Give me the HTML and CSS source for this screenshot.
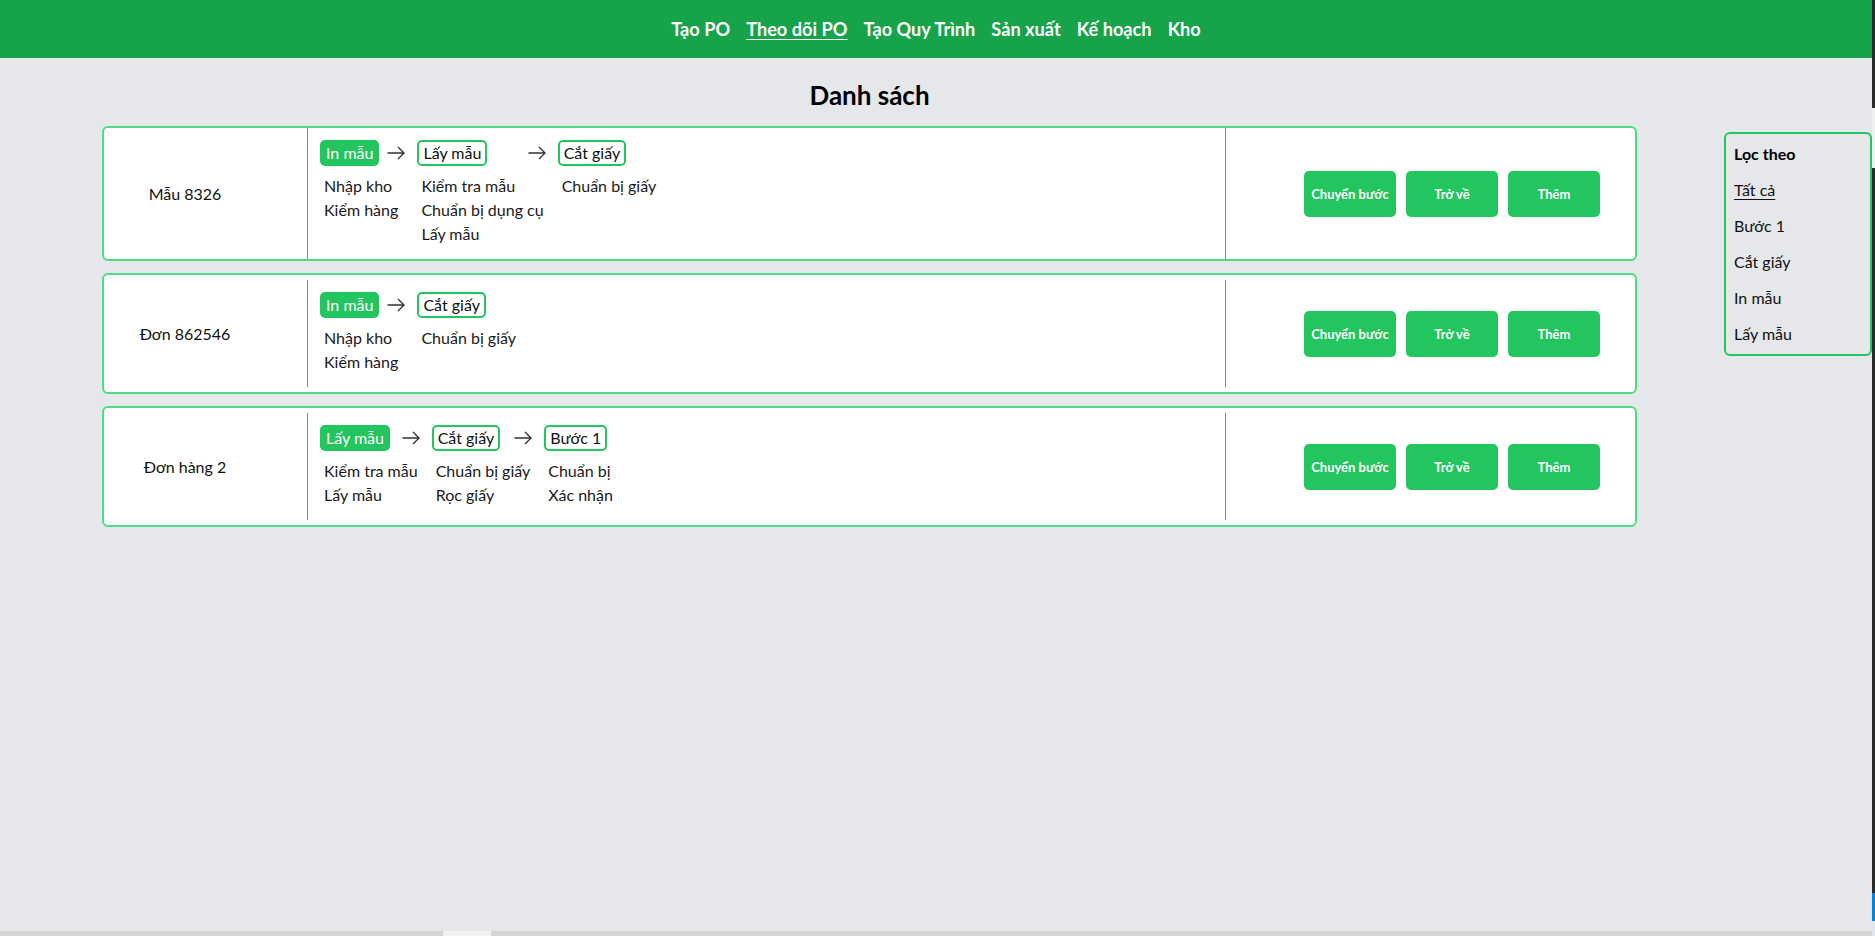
FILE: index.html
```html
<!DOCTYPE html>
<html lang="vi">
<head>
<meta charset="utf-8">
<title>Danh sách</title>
<link rel="stylesheet" href="styles.css">
</head>
<body>
<div class="app">
  <header class="topbar">
    <nav class="nav">
      <a class="nav-link" href="#">Tạo PO</a>
      <a class="nav-link nav-current" href="#">Theo dõi PO</a>
      <a class="nav-link" href="#">Tạo Quy Trình</a>
      <a class="nav-link" href="#">Sản xuất</a>
      <a class="nav-link" href="#">Kế hoạch</a>
      <a class="nav-link" href="#">Kho</a>
    </nav>
  </header>

  <div class="content">
    <main class="main">
      <h1 class="title">Danh sách</h1>

      <div class="card">
        <div class="row">
          <div class="name">Mẫu 8326</div>
          <div class="steps">
            <div class="step">
              <div class="step-head"><span class="tag tag-active">In mẫu</span><svg class="arrow" width="18" height="14" viewBox="0 0 18 14"><path d="M0.5 7H17M11 1L17 7L11 13" fill="none" stroke="#333" stroke-width="1.4"/></svg></div>
              <ul class="tasks"><li>Nhập kho</li><li>Kiểm hàng</li></ul>
            </div>
            <div class="step">
              <div class="step-head"><span class="tag">Lấy mẫu</span><svg class="arrow" width="18" height="14" viewBox="0 0 18 14"><path d="M0.5 7H17M11 1L17 7L11 13" fill="none" stroke="#333" stroke-width="1.4"/></svg></div>
              <ul class="tasks"><li>Kiểm tra mẫu</li><li>Chuẩn bị dụng cụ</li><li>Lấy mẫu</li></ul>
            </div>
            <div class="step">
              <div class="step-head"><span class="tag">Cắt giấy</span></div>
              <ul class="tasks"><li>Chuẩn bị giấy</li></ul>
            </div>
          </div>
          <div class="actions">
            <button class="btn">Chuyển bước</button>
            <button class="btn">Trở về</button>
            <button class="btn">Thêm</button>
          </div>
        </div>
      </div>

      <div class="card">
        <div class="row">
          <div class="name">Đơn 862546</div>
          <div class="steps">
            <div class="step">
              <div class="step-head"><span class="tag tag-active">In mẫu</span><svg class="arrow" width="18" height="14" viewBox="0 0 18 14"><path d="M0.5 7H17M11 1L17 7L11 13" fill="none" stroke="#333" stroke-width="1.4"/></svg></div>
              <ul class="tasks"><li>Nhập kho</li><li>Kiểm hàng</li></ul>
            </div>
            <div class="step">
              <div class="step-head"><span class="tag">Cắt giấy</span></div>
              <ul class="tasks"><li>Chuẩn bị giấy</li></ul>
            </div>
          </div>
          <div class="actions">
            <button class="btn">Chuyển bước</button>
            <button class="btn">Trở về</button>
            <button class="btn">Thêm</button>
          </div>
        </div>
      </div>

      <div class="card">
        <div class="row">
          <div class="name">Đơn hàng 2</div>
          <div class="steps">
            <div class="step">
              <div class="step-head"><span class="tag tag-active">Lấy mẫu</span><svg class="arrow" width="18" height="14" viewBox="0 0 18 14"><path d="M0.5 7H17M11 1L17 7L11 13" fill="none" stroke="#333" stroke-width="1.4"/></svg></div>
              <ul class="tasks"><li>Kiểm tra mẫu</li><li>Lấy mẫu</li></ul>
            </div>
            <div class="step">
              <div class="step-head"><span class="tag">Cắt giấy</span><svg class="arrow" width="18" height="14" viewBox="0 0 18 14"><path d="M0.5 7H17M11 1L17 7L11 13" fill="none" stroke="#333" stroke-width="1.4"/></svg></div>
              <ul class="tasks"><li>Chuẩn bị giấy</li><li>Rọc giấy</li></ul>
            </div>
            <div class="step">
              <div class="step-head"><span class="tag">Bước 1</span></div>
              <ul class="tasks"><li>Chuẩn bị</li><li>Xác nhận</li></ul>
            </div>
          </div>
          <div class="actions">
            <button class="btn">Chuyển bước</button>
            <button class="btn">Trở về</button>
            <button class="btn">Thêm</button>
          </div>
        </div>
      </div>
    </main>

    <aside class="filter">
      <div class="filter-title">Lọc theo</div>
      <a class="filter-item filter-current" href="#">Tất cả</a>
      <a class="filter-item" href="#">Bước 1</a>
      <a class="filter-item" href="#">Cắt giấy</a>
      <a class="filter-item" href="#">In mẫu</a>
      <a class="filter-item" href="#">Lấy mẫu</a>
    </aside>
  </div>
</div>
<div class="vstrip"></div>
<div class="hscroll"><div class="hscroll-thumb"></div></div>
</body>
</html>
```

FILE: styles.css
```css
* { box-sizing: border-box; }

html, body {
  margin: 0;
  padding: 0;
  background: #e5e7eb;
  font-family: Lato, "Noto Sans", "Liberation Sans", sans-serif;
  color: #111;
}

.app {
  margin-right: 3px;
  min-height: 936px;
}

.topbar {
  height: 58px;
  background: #16a34a;
  display: flex;
  align-items: center;
  justify-content: center;
}

.nav {
  display: flex;
  gap: 16px;
  align-items: center;
}

.nav-link {
  color: #fff;
  font-size: 18.2px;
  font-weight: 700;
  text-decoration: none;
  line-height: 24px;
}

.nav-current {
  text-decoration: underline;
  text-underline-offset: 3px;
  text-decoration-thickness: 1px;
}

.content {
  display: flex;
  align-items: flex-start;
  padding-left: 102px;
}

.main {
  flex: 0 0 1535px;
  width: 1535px;
}

.title {
  margin: 0 0 14px;
  padding-top: 20px;
  font-size: 26px;
  line-height: 34px;
  font-weight: 700;
  text-align: center;
  color: #000;
}

.card {
  background: #fff;
  border: 2px solid #4ade80;
  border-radius: 6px;
  min-height: 121px;
  display: flex;
  align-items: center;
  margin-bottom: 12px;
}

.row {
  display: flex;
  width: 100%;
  align-items: stretch;
}

.name {
  width: 203px;
  flex: 0 0 203px;
  padding-right: 41px;
  text-align: center;
  align-self: center;
  font-size: 16px;
  color: #111;
}

.steps {
  flex: 1;
  border-left: 1px solid #22c55e;
  padding: 12px 12px 13px 12px;
  display: flex;
  gap: 12px;
  align-items: flex-start;
}

.step {
  display: flex;
  flex-direction: column;
}

.step-head {
  display: flex;
  align-items: center;
  justify-content: space-between;
  gap: 8px;
  height: 26px;
}

.tag {
  display: inline-block;
  height: 26px;
  border: 2px solid #22c55e;
  border-radius: 5px;
  padding: 0 4px;
  line-height: 22px;
  font-size: 16px;
  color: #111;
  background: #fff;
  white-space: nowrap;
}

.tag-active {
  background: #22c55e;
  color: #fff;
}

.arrow {
  flex: 0 0 18px;
  display: block;
}

.tasks {
  list-style: none;
  margin: 8px 0 0;
  padding: 0 2px 0 4px;
  font-size: 16px;
  line-height: 24px;
  color: #1a1a1a;
  white-space: nowrap;
}

.actions {
  flex: 0 0 410px;
  width: 410px;
  border-left: 1px solid #22c55e;
  display: flex;
  align-items: center;
  justify-content: flex-end;
  gap: 10px;
  padding-right: 35px;
}

.btn {
  width: 92px;
  height: 46px;
  border: none;
  border-radius: 5px;
  background: #22c55e;
  color: #fff;
  font-family: Lato, "Noto Sans", "Liberation Sans", sans-serif;
  font-size: 13px;
  font-weight: 700;
  padding: 0;
}

.filter {
  margin-left: auto;
  margin-top: 74px;
  width: 148px;
  border: 2px solid #22c55e;
  border-radius: 6px;
  padding: 8px 8px 8px;
  display: flex;
  flex-direction: column;
  gap: 12px;
}

.filter-title {
  font-weight: 700;
  font-size: 16px;
  line-height: 24px;
  color: #000;
}

.filter-item {
  font-size: 16px;
  line-height: 24px;
  color: #111;
  text-decoration: none;
}

.filter-current {
  text-decoration: underline;
  text-underline-offset: 3px;
}

.vstrip {
  position: fixed;
  top: 0;
  right: 0;
  width: 3px;
  height: 100%;
  background: linear-gradient(to bottom, #2b2b2b 0, #2b2b2b 108px, #f0f0f0 108px, #f0f0f0 168px, #2b2b2b 168px, #2b2b2b 893px, #0a84d6 893px, #0a84d6 921px, #dfe6ee 921px);
}

.hscroll {
  position: fixed;
  left: 0;
  right: 3px;
  bottom: 0;
  height: 5px;
  background: #d4d4d4;
}

.hscroll-thumb {
  position: absolute;
  left: 443px;
  top: 0;
  width: 48px;
  height: 5px;
  background: #f1f1f1;
}
```
